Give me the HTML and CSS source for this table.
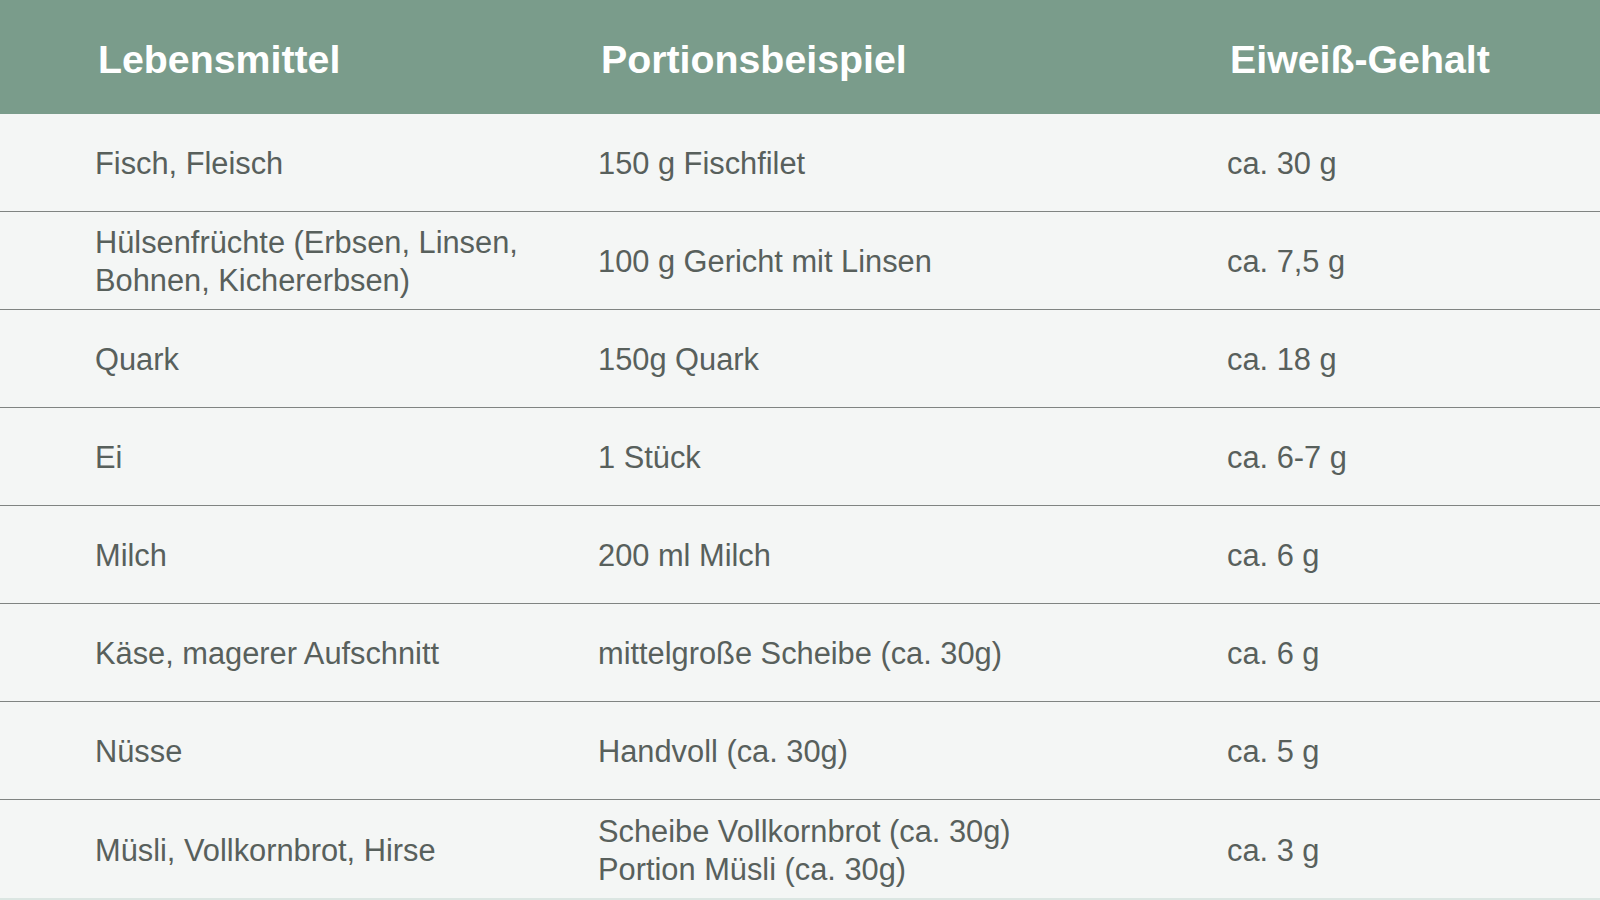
FILE: index.html
```html
<!DOCTYPE html>
<html lang="de">
<head>
<meta charset="utf-8">
<title>Eiweiß-Gehalt</title>
<link rel="stylesheet" href="styles.css">
</head>
<body>
<div class="table">
  <div class="row head">
    <div class="cell">Lebensmittel</div>
    <div class="cell">Portionsbeispiel</div>
    <div class="cell">Eiweiß-Gehalt</div>
  </div>
  <div class="row">
    <div class="cell">Fisch, Fleisch</div>
    <div class="cell">150 g Fischfilet</div>
    <div class="cell">ca. 30 g</div>
  </div>
  <div class="row">
    <div class="cell">Hülsenfrüchte (Erbsen, Linsen,<br>Bohnen, Kichererbsen)</div>
    <div class="cell">100 g Gericht mit Linsen</div>
    <div class="cell">ca. 7,5 g</div>
  </div>
  <div class="row">
    <div class="cell">Quark</div>
    <div class="cell">150g Quark</div>
    <div class="cell">ca. 18 g</div>
  </div>
  <div class="row">
    <div class="cell">Ei</div>
    <div class="cell">1 Stück</div>
    <div class="cell">ca. 6-7 g</div>
  </div>
  <div class="row">
    <div class="cell">Milch</div>
    <div class="cell">200 ml Milch</div>
    <div class="cell">ca. 6 g</div>
  </div>
  <div class="row">
    <div class="cell">Käse, magerer Aufschnitt</div>
    <div class="cell">mittelgroße Scheibe (ca. 30g)</div>
    <div class="cell">ca. 6 g</div>
  </div>
  <div class="row">
    <div class="cell">Nüsse</div>
    <div class="cell">Handvoll (ca. 30g)</div>
    <div class="cell">ca. 5 g</div>
  </div>
  <div class="row last">
    <div class="cell">Müsli, Vollkornbrot, Hirse</div>
    <div class="cell">Scheibe Vollkornbrot (ca. 30g)<br>Portion Müsli (ca. 30g)</div>
    <div class="cell">ca. 3 g</div>
  </div>
  <div class="foot"></div>
</div>
</body>
</html>
```

FILE: styles.css
```css
html, body {
  margin: 0;
  padding: 0;
  background: #f4f6f5;
}

body {
  font-family: "Liberation Sans", Arial, sans-serif;
  color: #58605c;
  width: 1600px;
  height: 900px;
  overflow: hidden;
}

.table {
  display: flex;
  flex-direction: column;
}

.row {
  display: grid;
  grid-template-columns: 503px 629px 1fr;
  align-items: center;
  box-sizing: border-box;
  height: 98px;
  padding-left: 95px;
  padding-top: 3px;
  border-bottom: 1px solid #808482;
  font-size: 30.8px;
  line-height: 38px;
}

.row.head {
  height: 114px;
  padding-left: 98px;
  padding-top: 3px;
  background: #7a9c8b;
  color: #ffffff;
  font-weight: bold;
  font-size: 39.3px;
  border-bottom: none;
}

.row.head .cell:first-child {
  margin-right: -3px;
}

.row.last {
  height: 98px;
  border-bottom: none;
}

.foot {
  height: 2px;
  background: #dbe6e2;
}
```
